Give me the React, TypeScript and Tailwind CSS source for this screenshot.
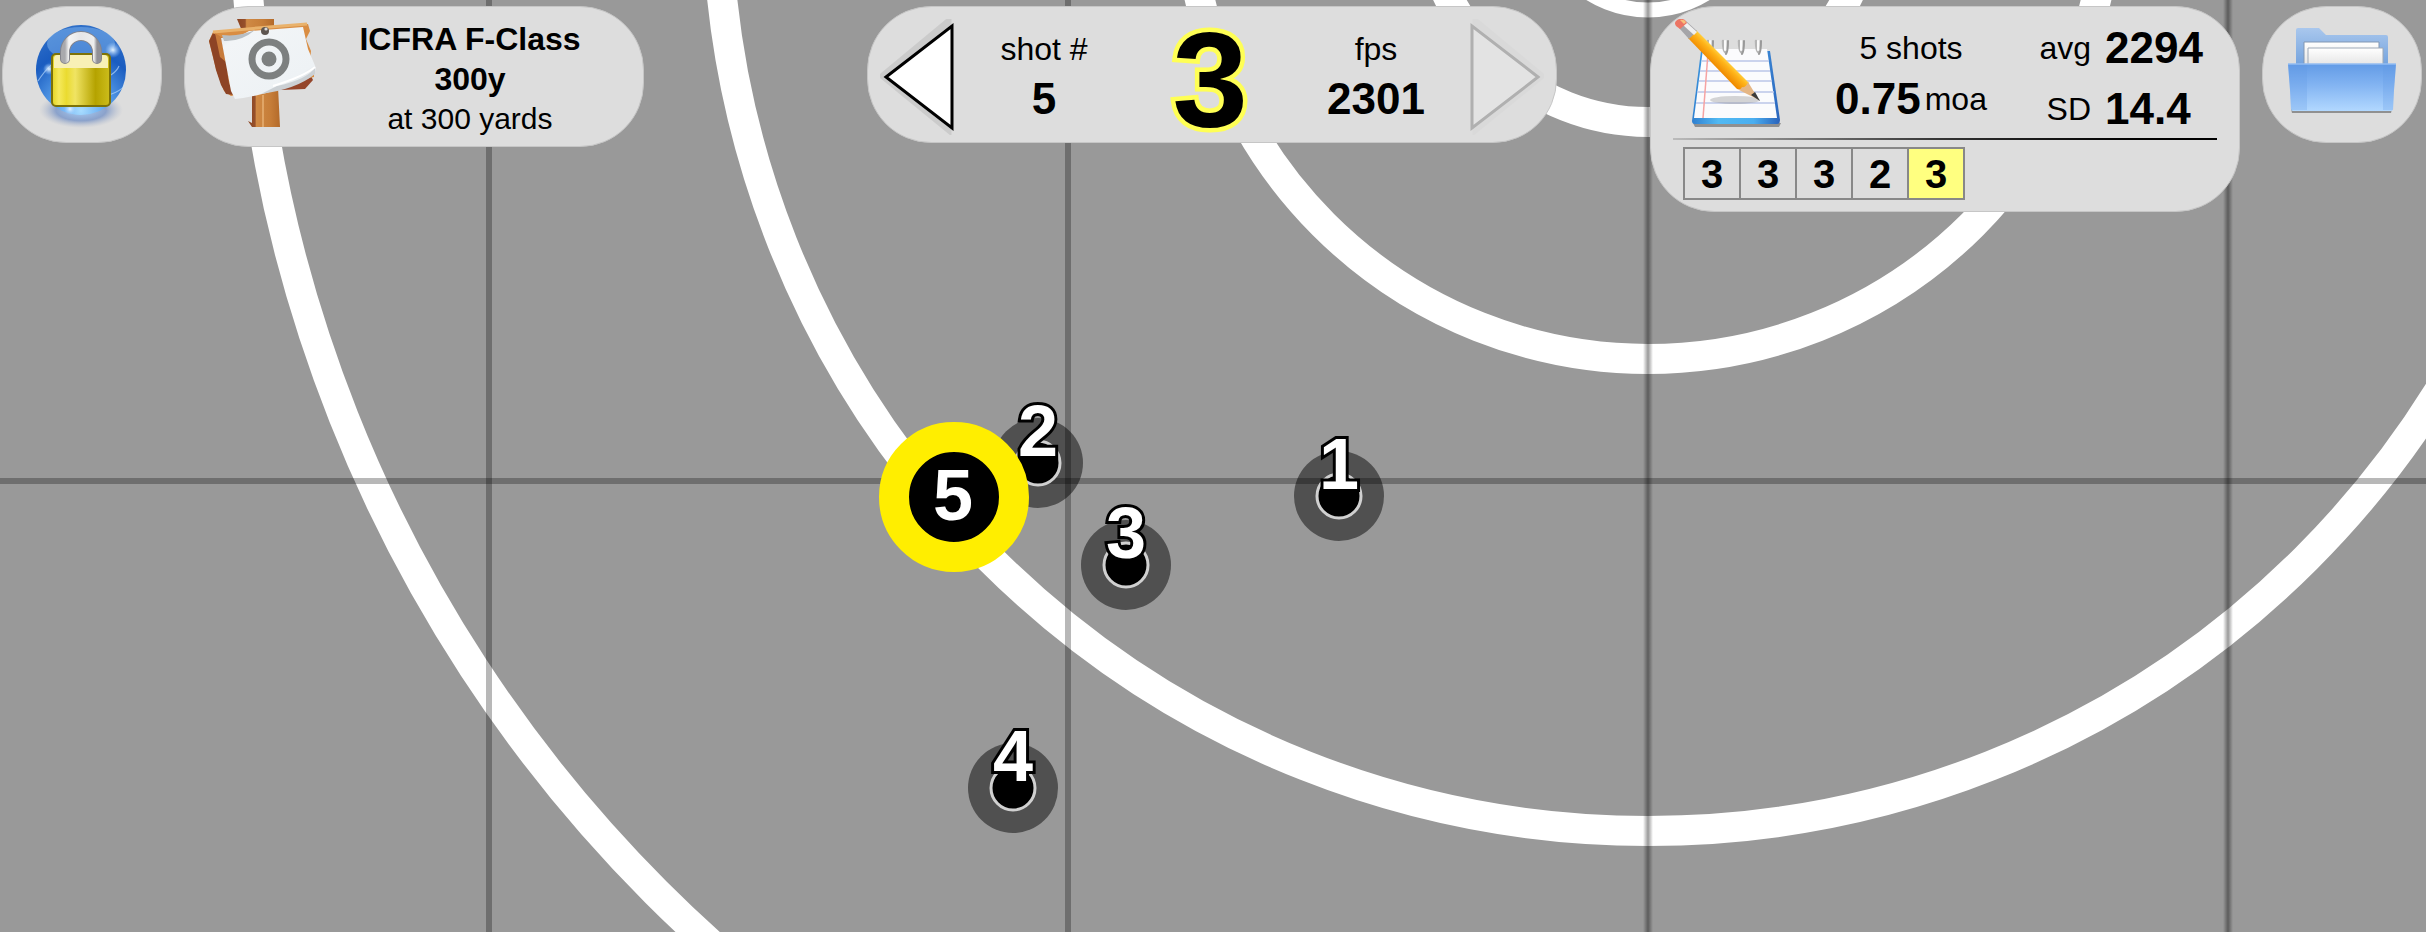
import type { ReactNode } from "react";

const rings = [
  { r: 110, w: 15 },
  { r: 222, w: 30 },
  { r: 459, w: 30 },
  { r: 931, w: 30 },
  { r: 1403, w: 30 },
];

const shots = [
  { n: 1, x: 1339, y: 496 },
  { n: 2, x: 1038, y: 463 },
  { n: 3, x: 1126, y: 565 },
  { n: 4, x: 1013, y: 788 },
];

const scores = [3, 3, 3, 2, 3];

function Target() {
  return (
    <svg className="absolute inset-0 h-full w-full" viewBox="0 0 2426 932" preserveAspectRatio="xMidYMin slice" aria-label="Target with shots">
      <defs>
        <linearGradient id="soft">
          <stop offset="0" stopColor="#000" stopOpacity="0" />
          <stop offset=".5" stopColor="#000" stopOpacity=".4" />
          <stop offset="1" stopColor="#000" stopOpacity="0" />
        </linearGradient>
      </defs>
      {rings.map((ring) => (
        <circle key={ring.r} cx="1648" cy="-100" r={ring.r} fill="none" stroke="#fff" strokeWidth={ring.w} />
      ))}
      <rect x="486" width="6" height="932" fill="#000" opacity=".28" />
      <rect x="1065" width="6" height="932" fill="#000" opacity=".28" />
      <rect x="1643" width="10" height="932" fill="url(#soft)" />
      <rect x="2223" width="10" height="932" fill="url(#soft)" />
      <rect y="478" width="2426" height="6" fill="#000" opacity=".28" />
      {shots.map((s) => (
        <g key={s.n}>
          <circle cx={s.x} cy={s.y} r="45" fill="#000" opacity=".48" />
          <circle cx={s.x} cy={s.y} r="22" fill="#000" stroke="#d0d0d0" strokeWidth="3" />
          <text
            x={s.x}
            y={s.y - 7}
            textAnchor="middle"
            className="font-['Liberation_Sans',Arial,sans-serif] text-[72px] font-bold"
            fill="#fff"
            stroke="#000"
            strokeWidth="6"
            paintOrder="stroke"
          >
            {s.n}
          </text>
        </g>
      ))}
      <circle cx="954" cy="497" r="60" fill="#000" stroke="#ffee00" strokeWidth="30" />
      <text x="953" y="520" textAnchor="middle" fill="#fff" className="font-['Liberation_Sans',Arial,sans-serif] text-[72px] font-bold">
        5
      </text>
    </svg>
  );
}

function LockIcon() {
  return (
    <svg viewBox="1 4 96 108" className="h-[108px] w-24" aria-hidden="true">
      <defs>
        <radialGradient id="globe" cx=".5" cy=".95" r=".95">
          <stop offset="0" stopColor="#a8dcff" />
          <stop offset=".3" stopColor="#5fa6ee" />
          <stop offset=".7" stopColor="#1a5cc0" />
          <stop offset="1" stopColor="#2f6fc8" />
        </radialGradient>
        <linearGradient id="brass">
          <stop offset="0" stopColor="#e3d422" />
          <stop offset=".12" stopColor="#f5e95c" />
          <stop offset=".25" stopColor="#eadb30" />
          <stop offset=".4" stopColor="#f0e463" />
          <stop offset=".75" stopColor="#b5a300" />
          <stop offset="1" stopColor="#cdbd1c" />
        </linearGradient>
        <linearGradient id="steel">
          <stop offset="0" stopColor="#a9a9ad" />
          <stop offset=".12" stopColor="#f5f5f5" />
          <stop offset=".5" stopColor="#e6e6e8" />
          <stop offset=".9" stopColor="#eeeeee" />
          <stop offset="1" stopColor="#909096" />
        </linearGradient>
        <radialGradient id="floor">
          <stop offset="0" stopColor="#a9d0f8" />
          <stop offset=".6" stopColor="#8ba2cb" />
          <stop offset="1" stopColor="#b8bfce" stopOpacity="0" />
        </radialGradient>
        <radialGradient id="glow">
          <stop offset="0" stopColor="#e4f3ff" />
          <stop offset="1" stopColor="#9fcbff" stopOpacity="0" />
        </radialGradient>
      </defs>
      <ellipse cx="48" cy="91" rx="42" ry="18" fill="url(#floor)" />
      <circle cx="48" cy="51" r="45" fill="url(#globe)" />
      <ellipse cx="48" cy="25" rx="34" ry="17" fill="#8fc0f5" opacity=".45" />
      <path d="M5 62Q18 42 30 40M78 56Q84 52 86 47M76 76Q88 72 92 66" fill="none" stroke="#c6e4ff" strokeWidth="1.2" opacity=".6" />
      <circle cx="80" cy="31" r="8" fill="url(#glow)" />
      <circle cx="16" cy="50" r="6" fill="url(#glow)" />
      <circle cx="37" cy="90" r="6" fill="url(#glow)" />
      <rect x="19" y="35" width="58" height="52" rx="4" fill="url(#brass)" stroke="#7d7208" strokeWidth="2" />
      <path d="M21 49V40q0-4 4-4h46q4 0 4 4v9z" fill="#f8f0b6" />
      <path d="M32 40V33a16 16 0 0 1 32 0v7" fill="none" stroke="#84848c" strokeWidth="10" strokeLinecap="round" />
      <path d="M32 40V33a16 16 0 0 1 32 0v7" fill="none" stroke="url(#steel)" strokeWidth="8" strokeLinecap="round" />
    </svg>
  );
}

function SignIcon() {
  return (
    <svg viewBox="0 0 108 108" className="size-[108px] shrink-0" aria-hidden="true">
      <defs>
        <linearGradient id="post">
          <stop offset="0" stopColor="#8a4422" />
          <stop offset=".22" stopColor="#96502b" />
          <stop offset=".26" stopColor="#d08a45" />
          <stop offset=".7" stopColor="#c67d38" />
          <stop offset="1" stopColor="#b36a2a" />
        </linearGradient>
        <linearGradient id="paper" x2=".8" y2="1">
          <stop offset="0" stopColor="#d6dadd" />
          <stop offset=".18" stopColor="#f2f5f7" />
          <stop offset=".8" stopColor="#eef2f5" />
          <stop offset="1" stopColor="#c4cbd0" />
        </linearGradient>
      </defs>
      <path d="M28 0H65V12H33z" fill="url(#post)" />
      <path d="M43 70L69 68L71 108H43L39 102L43 104z" fill="url(#post)" />
      <path d="M54 76V108" stroke="#e0a566" strokeWidth="2" />
      <path d="M65 68L102 57L104 61L96 70L72 71z" fill="#94452a" />
      <path d="M4 13L99 5L101 12L97 20L102 32L101 42L105 48V58L22 77L15 72L7 50L0 22z" fill="#d98d43" />
      <path d="M0 22L4 14L13 19L16 36L25 76L17 75L12 66L7 51L4 38z" fill="#8d4425" />
      <path d="M6 14L12 18L17 43L11 38zM18 52L24 73L20 64z" fill="#c77b3b" />
      <path d="M4 13L60 8L98 5" fill="none" stroke="#e9b26c" strokeWidth="3" />
      <path d="M12 19Q30 19 40 12L94 8L99 30L107 49Q107 55 97 60Q60 76 26 80L22 72z" fill="url(#paper)" />
      <path d="M13 16Q30 18 46 11Q32 23 15 22z" fill="#b8bec3" />
      <path d="M106 48Q100 60 68 67Q60 71 52 75Q88 70 106 55z" fill="#cbd0d4" />
      <path d="M106 48Q96 57 64 67" fill="none" stroke="#fff" strokeWidth="2" />
      <circle cx="56" cy="12" r="4" fill="#5d5550" />
      <circle cx="57" cy="10" r="1.6" fill="#d9d9d9" />
      <circle cx="60" cy="40" r="17" fill="none" stroke="#7d8080" strokeWidth="7" />
      <circle cx="60" cy="40" r="7.5" fill="#7d8080" />
    </svg>
  );
}

function NotepadIcon() {
  return (
    <svg viewBox="0 0 108 108" className="size-[108px] shrink-0" aria-hidden="true">
      <defs>
        <linearGradient id="pad">
          <stop offset="0" stopColor="#2f7fd0" />
          <stop offset=".3" stopColor="#51b9f2" />
          <stop offset=".7" stopColor="#4aaef0" />
          <stop offset="1" stopColor="#2a62bb" />
        </linearGradient>
        <linearGradient id="wood" x1="0" y1="1" x2="1" y2="0">
          <stop offset=".42" stopColor="#f08b00" />
          <stop offset=".52" stopColor="#ffb41a" />
          <stop offset=".6" stopColor="#ffe25a" />
        </linearGradient>
      </defs>
      <path d="M18 104H106L104 108H20z" fill="#000" opacity=".35" />
      <path d="M26 32H95L105 101Q105 105 102 105H20Q17 105 17 102z" fill="url(#pad)" />
      <path d="M28 30H92L102 99H19z" fill="#fbfbfd" />
      <path d="M27 42H94M25 52H95M24 62H97M22 73H99M21 84H100" stroke="#bcc6e8" strokeWidth="1.5" />
      <path d="M33 34L28 99" stroke="#f6a3a3" strokeWidth="1.5" />
      <ellipse cx="60" cy="81" rx="25" ry="4" fill="#999" opacity=".4" />
      {[35, 50, 66, 83].map((x) => (
        <g key={x} fill="none" strokeLinecap="round">
          <path d={`M${x - 2} 22Q${x - 2} 32 ${x + 1} 34`} stroke="#b5b5b5" strokeWidth="2.5" />
          <path d={`M${x + 3} 22Q${x + 3} 32 ${x + 1} 35`} stroke="#999" strokeWidth="2" />
          <path d={`M${x} 22V31`} stroke="#fafafa" strokeWidth="2" />
        </g>
      ))}
      <path d="M13 19L21 11L74 64L69 71L62 70z" fill="url(#wood)" />
      <path d="M62 70Q66 71 67 68Q71 69 73 63L84 81z" fill="#e5b685" />
      <path d="M76 76L80 73L85 82z" fill="#3b3b3b" />
      <path d="M4 9L11 2L22 12L14 20z" fill="#a5a5a8" />
      <path d="M8 6L11 3L22 13L19 16z" fill="#f0f0f0" />
      <path d="M1 2Q5-2 10 1L12 4L5 10L1 7Q-1 4 1 2z" fill="#ec7564" />
      <path d="M5 1Q9 0 11 3L9 5z" fill="#f8c07a" />
    </svg>
  );
}

function FolderIcon() {
  return (
    <svg viewBox="0 0 110 90" className="h-[90px] w-[110px]" aria-hidden="true">
      <defs>
        <linearGradient id="back" x2="0" y2="1">
          <stop offset="0" stopColor="#a9c7ed" />
          <stop offset="1" stopColor="#6e9fdc" />
        </linearGradient>
        <linearGradient id="front" x2="0" y2="1">
          <stop offset="0" stopColor="#629be6" />
          <stop offset=".45" stopColor="#83b4f2" />
          <stop offset="1" stopColor="#b2d8ff" />
        </linearGradient>
        <linearGradient id="sheet" x2="0" y2="1">
          <stop offset="0" stopColor="#fff" />
          <stop offset="1" stopColor="#e2e2e2" />
        </linearGradient>
      </defs>
      <path d="M9 3Q9 1 11 1H32L39 8H99Q101 8 101 10V42H9z" fill="url(#back)" />
      <path d="M17 15H92V40H17z" fill="url(#sheet)" stroke="#8297b2" strokeWidth="1" />
      <path d="M21 21H96V40H21z" fill="url(#sheet)" stroke="#9da8b6" strokeWidth="1" />
      <path d="M4 82H105L104 86H5z" fill="#000" opacity=".35" />
      <path d="M1 37H109L107 63L106 82Q106 84 104 84H6Q4 84 4 82L3 63z" fill="url(#front)" />
      <path d="M1 37H20V83H4L3 63zM96 37H109L107 63L106 83H96z" fill="#5f97e2" opacity=".25" />
      <path d="M1 37H109" stroke="#93bdf2" strokeWidth="1.5" />
    </svg>
  );
}

function Arrow({ flip = false }: { flip?: boolean }) {
  return (
    <svg viewBox="0 0 76 116" className={flip ? "h-[116px] w-19 -scale-x-100 opacity-20" : "h-[116px] w-19"} aria-hidden="true">
      <path d="M3 57L68 3V110z" fill="none" stroke="#000" strokeWidth="7" opacity=".08" />
      <path d="M6 58L72 7V109z" fill="#fff" stroke="#000" strokeWidth="3" />
    </svg>
  );
}

function Stat({ label, value }: { label: string; value: ReactNode }) {
  return (
    <div className="flex w-36 flex-col items-center">
      <span className="text-[32px] leading-[48px]">{label}</span>
      <span className="text-[44px] leading-[52px] font-bold">{value}</span>
    </div>
  );
}

const pill = "rounded-[64px] border border-[#c6c6c6] bg-[#dddddd]";

export default function App() {
  return (
    <main className="relative min-h-screen overflow-hidden bg-[#999999] font-['Liberation_Sans',Arial,sans-serif] text-black">
      <Target />
      <header className="relative grid grid-cols-[1fr_auto_1fr] items-start pt-1.5 pr-1 pl-0.5">
        <div className="flex items-start gap-[22px]">
          <button aria-label="Lock" className={`${pill} flex h-[137px] w-40 justify-center pt-4`}>
            <LockIcon />
          </button>
          <button className={`${pill} flex h-[141px] w-[460px] items-start gap-3 pt-3 pl-6`}>
            <SignIcon />
            <span className="flex flex-1 flex-col pr-8 text-center text-[32px] leading-[40px] font-bold">
              <span>ICFRA F-Class</span>
              <span>300y</span>
              <span className="text-[30px] font-normal">at 300 yards</span>
            </span>
          </button>
        </div>

        <section className={`${pill} flex h-[137px] w-[690px] items-start justify-between px-3 pt-3`}>
          <button aria-label="Previous shot">
            <Arrow />
          </button>
          <div className="flex flex-1 items-start justify-between pt-1.5 pr-5 pl-4">
            <Stat label="shot #" value="5" />
            <strong className="-mt-6 text-[136px] leading-[156px] [-webkit-text-stroke:9px_#ffff55] [paint-order:stroke_fill]">3</strong>
            <Stat label="fps" value="2301" />
          </div>
          <button aria-label="Next shot" disabled>
            <Arrow flip />
          </button>
        </section>

        <div className="flex items-start justify-end gap-[22px]">
          <section className={`${pill} h-[206px] w-[590px]`}>
            <div className="flex h-[131px] items-start pt-2.5 pl-6">
              <button aria-label="Notes" className="mt-0.5 h-[108px]">
                <NotepadIcon />
              </button>
              <div className="flex w-57 flex-col items-center pt-2 pl-7">
                <span className="text-[32px] leading-[46px]">5 shots</span>
                <span className="flex items-center gap-1 text-[44px] leading-[56px] font-bold">
                  0.75
                  <span className="text-[32px] font-normal">moa</span>
                </span>
              </div>
              <dl className="grid flex-1 grid-cols-[80px_1fr] items-center gap-x-3.5 text-[44px] leading-[61px] font-bold">
                <dt className="text-right text-[32px] leading-none font-normal">avg</dt>
                <dd>2294</dd>
                <dt className="text-right text-[32px] leading-none font-normal">SD</dt>
                <dd>14.4</dd>
              </dl>
            </div>
            <div className="mr-[22px] ml-[22px] h-0.5 bg-linear-to-r from-[#bbbbbb] via-[#333333] to-black" />
            <ol className="mt-[7px] ml-8 flex">
              {scores.map((score, i) => (
                <li
                  key={i}
                  className={`-mr-0.5 flex h-[53px] w-[58px] items-center justify-center border-2 border-[#888888] text-[40px] leading-none font-bold ${i === scores.length - 1 ? "bg-[#ffff80]" : ""}`}
                >
                  {score}
                </li>
              ))}
            </ol>
          </section>
          <button aria-label="Open folder" className={`${pill} flex h-[137px] w-40 justify-center pt-5`}>
            <FolderIcon />
          </button>
        </div>
      </header>
    </main>
  );
}
